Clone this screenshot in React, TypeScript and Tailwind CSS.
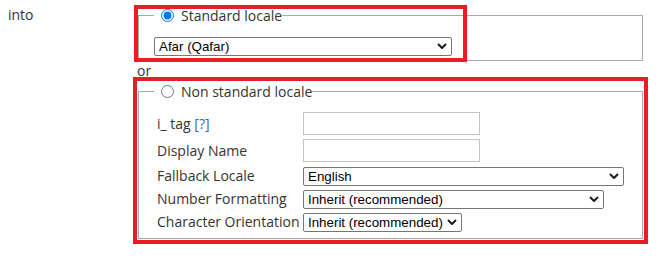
import React from "react";

function Chevron() {
  return (
    <svg width="10" height="6" viewBox="0 0 10 6" className="pointer-events-none absolute right-[5px] top-1/2 -translate-y-1/2">
      <path d="M1 1 L5 5 L9 1" fill="none" stroke="#1a1a1a" strokeWidth="2" />
    </svg>
  );
}

function Select({ value, w }: { value: string; w: string }) {
  return (
    <span className={`relative inline-block h-[19px] ${w}`}>
      <select
        defaultValue={value}
        className="h-[19px] w-full appearance-none rounded-[2px] border border-[#767676] bg-white pl-[4px] pr-[12px] font-['Liberation_Sans',Arial,sans-serif] text-[13.33px] leading-[15px] text-black"
      >
        <option value={value}>{value}</option>
      </select>
      <Chevron />
    </span>
  );
}

function Field() {
  return <input type="text" className="block h-[23px] w-[177px] border border-[#c3c3c3] bg-white" />;
}

export default function App() {
  return (
    <div className="relative flex h-[258px] w-[666px] bg-white font-['Open_Sans',sans-serif] text-[14px] leading-[19px] text-[#333]">
      <div className="w-[138px] shrink-0 pl-[8px] pt-[5px]">into</div>
      <div className="w-[505px] shrink-0 pt-[6px]">
        <fieldset className="border border-[#a9a9a9] px-[15px] pt-[11px] pb-[5px]">
          <legend>
            <span className="flex items-center">
              <input type="radio" name="loc" defaultChecked className="ml-[7px] mr-[7px] h-[13px] w-[13px]" />
              <span>Standard locale</span>
            </span>
          </legend>
          <Select value="Afar (Qafar)" w="w-[298px]" />
        </fieldset>
        <div className="-ml-px">or</div>
        <fieldset className="mt-[2px] border border-[#a9a9a9] px-[15px] pt-[11px] pb-[7px]">
          <legend>
            <span className="flex items-center">
              <input type="radio" name="loc" className="ml-[7px] mr-[7px] h-[13px] w-[13px]" />
              <span>Non standard locale</span>
            </span>
          </legend>
          <div className="grid grid-cols-[146px_auto] items-center gap-y-[4px] pl-[3px]">
            <div>
              i_ tag <span className="text-[#3366cc]">[?]</span>
            </div>
            <Field />
            <div>Display Name</div>
            <Field />
            <div>Fallback Locale</div>
            <Select value="English" w="w-[321px]" />
            <div>Number Formatting</div>
            <Select value="Inherit (recommended)" w="w-[301px]" />
            <div className="whitespace-nowrap">Character Orientation</div>
            <Select value="Inherit (recommended)" w="w-[159px]" />
          </div>
        </fieldset>
      </div>
      <div className="pointer-events-none absolute left-[134px] top-[5px] h-[57px] w-[333px] border-4 border-[#ec1c24]" />
      <div className="pointer-events-none absolute left-[133px] top-[77px] h-[167px] w-[515px] border-4 border-[#ec1c24]" />
    </div>
  );
}
